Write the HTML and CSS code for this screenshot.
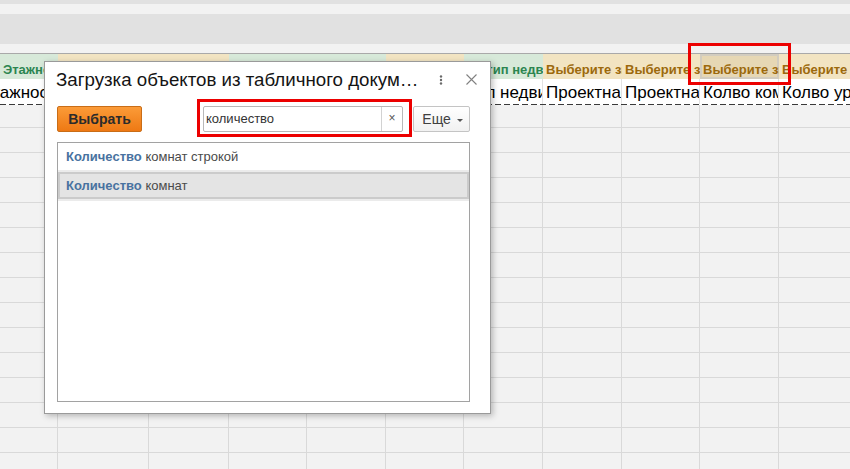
FILE: index.html
```html
<!DOCTYPE html>
<html lang="ru">
<head>
    <meta charset="UTF-8">
    <meta name="viewport" content="width=device-width, initial-scale=1.0">
    <title>Загрузка объектов</title>
    <link rel="stylesheet" href="styles.css">
</head>
<body>
    <div class="top">
        <div class="band band--a"></div>
        <div class="band band--b"></div>
        <div class="band band--c"></div>
        <div class="band band--d"></div>
    </div>

    <div class="sheet">
        <div class="row row--head">
            <div class="cell green">Этажность</div>
            <div class="cell beige">Выберите значение</div>
            <div class="cell beige">Выберите значение</div>
            <div class="cell green">Адрес объекта</div>
            <div class="cell green">Секция</div>
            <div class="cell beige">Выберите значение</div>
            <div class="cell green cell--pull">Подтип недвижимости</div>
            <div class="cell beige">Выберите значение</div>
            <div class="cell beige">Выберите значение</div>
            <div class="cell beige cell--picked">Выберите значение</div>
            <div class="cell beige">Выберите значение</div>
        </div>
        <div class="row row--values">
            <div class="cell cell--shift">Этажность</div>
            <div class="cell">Номер</div>
            <div class="cell">Площадь</div>
            <div class="cell">Адрес</div>
            <div class="cell">Секция</div>
            <div class="cell">Подъезд</div>
            <div class="cell">Тип недвижимости</div>
            <div class="cell">Проектная площадь</div>
            <div class="cell">Проектная цена</div>
            <div class="cell">Колво комнат</div>
            <div class="cell">Колво уровней</div>
        </div>
        <div class="sheet-body"></div>
    </div>

    <div class="dialog">
        <div class="dialog-head">
            <div class="dialog-title">Загрузка объектов из табличного документа</div>
            <svg class="dots" width="4" height="10" viewBox="0 0 4 10">
                <circle cx="2" cy="1.5" r="1.2" fill="#6a6a6a"/>
                <circle cx="2" cy="5" r="1.2" fill="#6a6a6a"/>
                <circle cx="2" cy="8.5" r="1.2" fill="#6a6a6a"/>
            </svg>
            <svg class="close" width="11" height="11" viewBox="0 0 11 11">
                <path d="M0.5 0.5 L10.5 10.5 M10.5 0.5 L0.5 10.5" stroke="#808080" stroke-width="1.1" fill="none"/>
            </svg>
        </div>
        <div class="dialog-body">
            <div class="toolbar">
                <button class="btn-choose">Выбрать</button>
                <div class="search">
                    <span class="search-text">количество</span>
                    <span class="search-clear">×</span>
                </div>
                <button class="btn-more">Еще <span class="caret"></span></button>
            </div>
            <div class="list">
                <div class="item"><b>Количество</b> комнат строкой</div>
                <div class="item item--sel"><b>Количество</b> комнат</div>
            </div>
        </div>
    </div>

    <div class="mark mark--cell"></div>
    <div class="mark mark--search"></div>

    <script>
        const body = document.querySelector('.sheet-body');

        for (let i = 0; i < 15; i++) {
            const row = document.createElement('div');
            row.className = i === 0 ? 'row row--grid row--first' : 'row row--grid';
            for (let c = 0; c < 11; c++) {
                const cell = document.createElement('div');
                cell.className = 'cell';
                row.appendChild(cell);
            }
            body.appendChild(row);
        }
    </script>
</body>
</html>
```

FILE: styles.css
```css
* {
    box-sizing: border-box;
}

body {
    margin: 0;
    width: 850px;
    height: 469px;
    overflow: hidden;
    position: relative;
    background-color: #f2f2f2;
    font-family: "Liberation Sans", Arial, sans-serif;
    color: #000;
}

/* top panels */
.band {
    background-color: #e1e1e1;
}

.band--a { height: 4px; }
.band--b { height: 10px; background-color: #f2f2f2; }
.band--c { height: 30px; }
.band--d {
    height: 10px;
    background-color: #f2f2f2;
    border-bottom: 1px solid #a9a9a9;
}

/* spreadsheet */
.sheet {
    overflow: hidden;
}

.row {
    display: grid;
    grid-template-columns: 58px 91px 80px 78px 79px 78px 79px 79px 78px 79px 79px;
    width: 900px;
}

.cell {
    overflow: hidden;
    white-space: nowrap;
}

.row--head {
    height: 25px;
}

.row--head .cell {
    font-size: 13px;
    font-weight: bold;
    line-height: 18px;
    padding: 7px 0 0 3px;
}

.green {
    background-color: #d7e9d9;
    color: #2c8550;
}

.beige {
    background-color: #f2e4c2;
    color: #9c690c;
}

.row--head .cell--pull {
    padding-left: 0;
    text-indent: -3px;
}

.cell--picked {
    background-color: #e6d7b4;
    box-shadow: inset 0 0 0 2px #d2ccbf;
}

.row--values {
    height: 26px;
    background-color: #fff;
    background-image: linear-gradient(to right, #3a3a3a 6px, transparent 6px);
    background-size: 9px 1px;
    background-repeat: repeat-x;
    background-position: left bottom;
    padding-bottom: 1px;
}

.row--values .cell {
    font-size: 17px;
    line-height: 22px;
    padding: 3px 0 0 3px;
    border-right: 1px solid #e2e2e2;
}

.row--values .cell--shift {
    text-indent: -23px;
}

.row--grid {
    height: 25px;
}

.row--first {
    height: 23px;
}

.row--grid .cell {
    border-right: 1px solid #d9d9d9;
    border-bottom: 1px solid #d9d9d9;
}

/* dialog */
.dialog {
    position: absolute;
    left: 44px;
    top: 61px;
    width: 447px;
    height: 353px;
    background-color: #fff;
    border: 1px solid #9a9a9a;
    box-shadow: 2px 2px 6px rgba(0, 0, 0, 0.25);
}

.dialog-head {
    display: flex;
    align-items: center;
    height: 34px;
    padding: 0 13px 0 11px;
}

.dialog-title {
    flex: 1;
    font-size: 18.7px;
    color: #141414;
    white-space: nowrap;
    overflow: hidden;
    text-overflow: ellipsis;
    padding-right: 13px;
    padding-top: 1px;
}

.dots {
    margin: 1px 23px 0 0;
}

.close {
    margin-top: 1px;
}

.dialog-body {
    padding: 10px 20px 0 12px;
}

.toolbar {
    display: flex;
    align-items: center;
    height: 26px;
}

.btn-choose {
    width: 85px;
    height: 26px;
    border: 1px solid #c96d17;
    border-radius: 2px;
    background: linear-gradient(#fb9b38, #ee7914);
    font-family: inherit;
    font-size: 14px;
    font-weight: bold;
    color: #2b2b2b;
    padding: 0;
}

.search {
    display: flex;
    width: 200px;
    height: 26px;
    margin-left: auto;
    border: 1px solid #b8b8b8;
    border-radius: 2px;
    background-color: #fff;
}

.search-text {
    flex: 1;
    font-size: 13px;
    line-height: 24px;
    padding-left: 2px;
    color: #333;
}

.search-clear {
    width: 21px;
    border-left: 1px solid #d2d2d2;
    text-align: center;
    font-size: 12px;
    line-height: 23px;
    color: #555;
}

.btn-more {
    width: 57px;
    height: 26px;
    margin-left: 10px;
    border: 1px solid #c4c4c4;
    border-radius: 2px;
    background: linear-gradient(#ffffff, #f1f1f1);
    font-family: inherit;
    font-size: 14px;
    color: #404040;
    padding: 0 0 0 2px;
}

.caret {
    display: inline-block;
    margin-left: 2px;
    vertical-align: middle;
    border-left: 3px solid transparent;
    border-right: 3px solid transparent;
    border-top: 3px solid #555;
}

.list {
    margin-top: 10px;
    height: 260px;
    border: 1px solid #a2a2a2;
}

.item {
    height: 29px;
    padding: 0 0 2px 8px;
    border-bottom: 2px solid #ebebeb;
    font-size: 13px;
    line-height: 27px;
    color: #4a4a4a;
}

.item b {
    color: #4872a0;
}

.item--sel {
    background-color: #e4e4e4;
    box-shadow: inset 0 0 0 2px #cbcbcb;
}

/* red highlight frames */
.mark {
    position: absolute;
    border: 3px solid #ec0000;
}

.mark--cell {
    left: 688px;
    top: 43px;
    width: 103px;
    height: 42px;
}

.mark--search {
    left: 197px;
    top: 99px;
    width: 215px;
    height: 38px;
}
```
